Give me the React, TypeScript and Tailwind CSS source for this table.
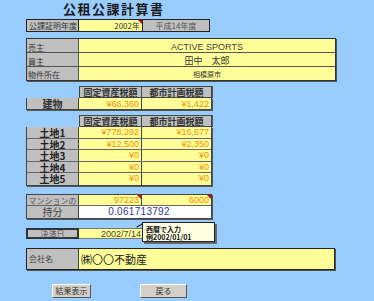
import React from "react";

const jp = { fontFamily: '"MS PGothic", "Noto Sans CJK JP", sans-serif' };
const num = { fontFamily: '"Liberation Sans", Arial, "Noto Sans CJK JP", sans-serif' };

function Mark() {
  return (
    <span className="absolute right-0 top-0 w-0 h-0 border-t-[4px] border-l-[4px] border-t-[#d00000] border-l-transparent" />
  );
}

export default function App() {
  const lands = [
    { name: "土地1", a: "¥778,292", b: "¥16,677", h: "h-[12px]" },
    { name: "土地2", a: "¥12,500", b: "¥2,350", h: "h-[11px]" },
    { name: "土地3", a: "¥0", b: "¥0", h: "h-[12px]" },
    { name: "土地4", a: "¥0", b: "¥0", h: "h-[11px]" },
    { name: "土地5", a: "¥0", b: "¥0", h: "h-[12px]" },
  ];

  return (
    <div className="w-[374px] h-[301px] bg-[#99ccff] overflow-hidden relative text-[#333] whitespace-nowrap" style={jp}>
      {/* title */}
      <div className="h-[19px] pl-[63px] pt-[1px] text-[13px] leading-[16px] font-bold tracking-[1.5px] text-[#1a1a1a]">
        公租公課計算書
      </div>

      {/* year */}
      <div className="flex ml-[26px] h-[13px] text-[8px] leading-[12px]">
        <div className="w-[53px] bg-[#c0c0c0] border border-[#222] pl-[2px] overflow-hidden">公課証明年度</div>
        <div className="relative w-[63px] bg-[#ffff99] border-y border-[#222] text-right pr-[2px] text-[#333]">
          2002年
          <Mark />
        </div>
        <div className="w-[68px] bg-[#c0c0c0] border border-[#222] text-center text-[#555]">平成14年度</div>
      </div>

      {/* parties */}
      <div className="ml-[26px] mt-[6px] w-[310px] border border-[#333] shadow-[1px_1px_0_#555] text-[8px]">
        <div className="flex h-[14px] border-b border-[#555]">
          <div className="w-[52px] bg-[#c0c0c0] border-r border-[#555] leading-[17px] pl-[1px]">売主</div>
          <div className="flex-1 bg-[#ffff99] text-center text-[9px] leading-[16px] text-[#444]" style={num}>
            ACTIVE SPORTS
          </div>
        </div>
        <div className="flex h-[14px] border-b border-[#555]">
          <div className="w-[52px] bg-[#c0c0c0] border-r border-[#555] leading-[17px] pl-[1px]">買主</div>
          <div className="flex-1 bg-[#ffff99] text-center text-[9px] leading-[15px] text-[#333]">田中　太郎</div>
        </div>
        <div className="flex h-[13px]">
          <div className="w-[52px] bg-[#c0c0c0] border-r border-[#555] leading-[16px] pl-[1px]">物件所在</div>
          <div className="flex-1 bg-[#ffff99] text-center text-[7px] leading-[15px] text-[#333]">相模原市</div>
        </div>
      </div>

      {/* building */}
      <div className="ml-[26px] mt-[5px] text-[9px]">
        <div className="flex h-[12px] ml-[53px] font-bold leading-[12px]">
          <div className="w-[63px] bg-[#c0c0c0] border border-[#444] text-center">固定資産税額</div>
          <div className="w-[70px] bg-[#c0c0c0] border-y border-r border-[#444] text-center shadow-[1px_0_0_#555]">都市計画税額</div>
        </div>
        <div className="flex h-[12px] leading-[12px] shadow-[1px_1px_0_#555] w-[186px]">
          <div className="w-[53px] bg-[#c0c0c0] border-x border-b border-[#444] text-center font-bold text-[10px] leading-[11px]">建物</div>
          <div className="w-[63px] bg-[#ffff99] border-r border-b border-[#444] text-right pr-[2px] text-[#f09000]" style={num}>¥66,360</div>
          <div className="w-[70px] bg-[#ffff99] border-r border-b border-[#444] text-right pr-[2px] text-[#f09000]" style={num}>¥1,422</div>
        </div>
      </div>

      {/* land */}
      <div className="ml-[26px] mt-[5px] text-[9px]">
        <div className="flex h-[12px] ml-[53px] font-bold leading-[12px]">
          <div className="w-[63px] bg-[#c0c0c0] border border-[#444] text-center">固定資産税額</div>
          <div className="w-[70px] bg-[#c0c0c0] border-y border-r border-[#444] text-center shadow-[1px_0_0_#555]">都市計画税額</div>
        </div>
        <div className="w-[186px] border-x border-b border-[#444] shadow-[1px_1px_0_#555]">
          {lands.map((l, i) => (
            <div key={l.name} className={`flex ${l.h} leading-[11px] ${i < 4 ? "border-b border-[#666]" : ""}`}>
              <div className="w-[52px] bg-[#c0c0c0] border-r border-[#444] text-center font-bold text-[10px] leading-[11px] text-[#222]">{l.name}</div>
              <div className="w-[63px] bg-[#ffff99] border-r border-[#444] text-right pr-[2px] text-[#f09000]" style={num}>{l.a}</div>
              <div className="flex-1 bg-[#ffff99] text-right pr-[2px] text-[#f09000]" style={num}>{l.b}</div>
            </div>
          ))}
        </div>
      </div>

      {/* mansion share */}
      <div className="ml-[26px] mt-[8px] w-[186px] border border-[#444] shadow-[1px_1px_0_#555] text-[9px]">
        <div className="flex h-[11px] leading-[11px] border-b border-[#666]">
          <div className="w-[52px] bg-[#c0c0c0] border-r border-[#444] text-center text-[8px] text-[#555]">マンションの</div>
          <div className="relative w-[63px] bg-[#ffff99] border-r border-[#444] text-right pr-[2px] text-[#f09000]" style={num}>
            97223
            <Mark />
          </div>
          <div className="relative flex-1 bg-[#ffff99] text-right pr-[2px] text-[#f09000]" style={num}>
            6000
            <Mark />
          </div>
        </div>
        <div className="flex h-[12px] leading-[12px]">
          <div className="w-[52px] bg-[#c0c0c0] border-r border-[#444] text-center text-[10px] text-[#444]">持分</div>
          <div className="flex-1 bg-white text-center text-[10px] text-[#333399] tracking-[0.3px] pr-[12px]" style={num}>
            0.061713792
          </div>
        </div>
      </div>

      {/* settlement date */}
      <div className="relative flex ml-[26px] mt-[9px] h-[11px] text-[8px] leading-[10px]">
        <div className="w-[53px] bg-[#c0c0c0] border-2 border-[#333] text-center text-[#555] leading-[7px]">決済日</div>
        <div className="w-[64px] bg-[#ffff99] border-y border-[#777] text-right pr-[2px] text-[#444] text-[9px]" style={num}>2002/7/14</div>
        <div className="w-[12px] bg-[#c0c0c0] border border-[#777] text-[#555] pl-[1px] overflow-hidden">平</div>
        <div className="absolute left-[116px] top-[-6px] w-[73px] h-[20px] bg-[#ffffe1] border border-[#222] shadow-[2px_2px_0_#666] text-[7px] leading-[8px] font-bold pl-[3px] pt-[2px] text-[#111]">
          <div>西暦で入力</div>
          <div>例2002/01/01</div>
        </div>
        <div className="absolute left-[110px] top-[-3px] w-[7px] h-[1px] bg-[#222] rotate-[-30deg]" />
      </div>

      {/* company */}
      <div className="flex ml-[26px] mt-[9px] w-[309px] h-[22px] border border-[#222] shadow-[1px_1px_0_#555]">
        <div className="w-[52px] bg-[#c0c0c0] border-r border-[#444] text-[8px] leading-[20px] pl-[2px] text-[#444]">会社名</div>
        <div className="flex-1 bg-[#ffff99] text-[11px] leading-[21px] pl-[2px] text-[#222]">㈱〇〇不動産</div>
      </div>

      {/* buttons */}
      <div className="flex mt-[14px] ml-[52px] gap-[49px] text-[8px]">
        <button className="w-[39px] h-[14px] bg-[#d4d0c8] border border-t-white border-l-white border-r-[#555] border-b-[#555] leading-[12px] text-[#333]">
          結果表示
        </button>
        <button className="w-[47px] h-[14px] bg-[#d4d0c8] border border-t-white border-l-white border-r-[#555] border-b-[#555] leading-[12px] text-[#333]">
          戻る
        </button>
      </div>
    </div>
  );
}
